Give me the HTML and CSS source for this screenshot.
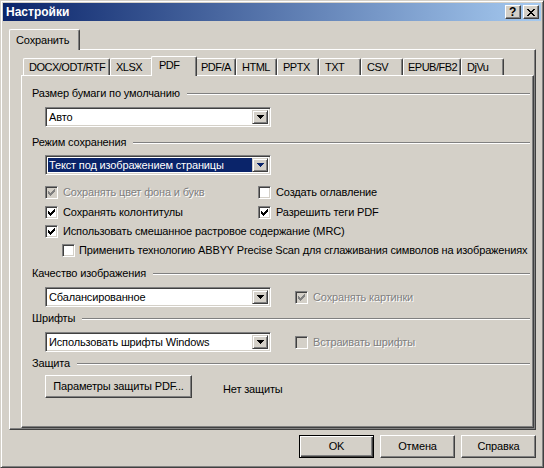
FILE: index.html
```html
<!DOCTYPE html>
<html lang="ru">
  <head>
    <meta charset="UTF-8" />
    <meta name="viewport" content="width=device-width, initial-scale=1.0" />
    <title>Настройки</title>
    <link rel="stylesheet" href="styles.css">
  </head>
  <body>
    <div class="window">
      <div class="titlebar">
        <span class="title">Настройки</span>
        <span class="cap-btn help">?</span>
        <span class="cap-btn close">
          <svg width="8" height="7" viewBox="0 0 8 7"><path d="M0 0h2v1H0zM6 0h2v1H6zM1 1h2v1H1zM5 1h2v1H5zM2 2h4v1H2zM3 3h2v1H3zM2 4h4v1H2zM1 5h2v1H1zM5 5h2v1H5zM0 6h2v1H0zM6 6h2v1H6z"/></svg>
        </span>
      </div>

      <div class="client">
        <div class="tabs outer-tabs">
          <div class="tab selected">Сохранить</div>
        </div>

        <div class="panel outer-panel">
          <div class="tabs inner-tabs">
            <div class="tab tab-docx">DOCX/ODT/RTF</div>
            <div class="tab tab-xlsx">XLSX</div>
            <div class="tab selected">PDF</div>
            <div class="tab tab-narrow">PDF/A</div>
            <div class="tab tab-narrow">HTML</div>
            <div class="tab">PPTX</div>
            <div class="tab">TXT</div>
            <div class="tab">CSV</div>
            <div class="tab tab-epub">EPUB/FB2</div>
            <div class="tab tab-xlsx">DjVu</div>
          </div>

          <div class="panel inner-panel">
            <div class="group-head head-paper"><span>Размер бумаги по умолчанию</span><i class="line"></i></div>
            <div class="combo">
              <span class="combo-text">Авто</span>
              <span class="combo-arrow"><svg width="7" height="4" viewBox="0 0 7 4"><path d="M0 0h7v1H0zM1 1h5v1H1zM2 2h3v1H2zM3 3h1v1H3z"/></svg></span>
            </div>

            <div class="group-head head-mode"><span>Режим сохранения</span><i class="line"></i></div>
            <div class="combo focused">
              <span class="combo-text">Текст под изображением страницы</span>
              <span class="combo-arrow"><svg width="7" height="4" viewBox="0 0 7 4"><path d="M0 0h7v1H0zM1 1h5v1H1zM2 2h3v1H2zM3 3h1v1H3z"/></svg></span>
            </div>

            <div class="options">
              <label class="option disabled">
                <span class="check"><svg width="7" height="7" viewBox="0 0 7 7"><path d="M6 0h1v1H6zM5 1h2v1H5zM0 2h1v1H0zM4 2h3v1H4zM0 3h2v1H0zM3 3h3v1H3zM0 4h5v1H0zM1 5h3v1H1zM2 6h1v1H2z"/></svg></span>
                Сохранять цвет фона и букв
              </label>
              <label class="option">
                <span class="check"></span>
                Создать оглавление
              </label>
              <label class="option">
                <span class="check"><svg width="7" height="7" viewBox="0 0 7 7"><path d="M6 0h1v1H6zM5 1h2v1H5zM0 2h1v1H0zM4 2h3v1H4zM0 3h2v1H0zM3 3h3v1H3zM0 4h5v1H0zM1 5h3v1H1zM2 6h1v1H2z"/></svg></span>
                Сохранять колонтитулы
              </label>
              <label class="option">
                <span class="check"><svg width="7" height="7" viewBox="0 0 7 7"><path d="M6 0h1v1H6zM5 1h2v1H5zM0 2h1v1H0zM4 2h3v1H4zM0 3h2v1H0zM3 3h3v1H3zM0 4h5v1H0zM1 5h3v1H1zM2 6h1v1H2z"/></svg></span>
                Разрешить теги PDF
              </label>
              <label class="option wide">
                <span class="check"><svg width="7" height="7" viewBox="0 0 7 7"><path d="M6 0h1v1H6zM5 1h2v1H5zM0 2h1v1H0zM4 2h3v1H4zM0 3h2v1H0zM3 3h3v1H3zM0 4h5v1H0zM1 5h3v1H1zM2 6h1v1H2z"/></svg></span>
                Использовать смешанное растровое содержание (MRC)
              </label>
              <label class="option wide sub">
                <span class="check"></span>
                Применить технологию ABBYY Precise Scan для сглаживания символов на изображениях
              </label>
            </div>

            <div class="group-head head-quality"><span>Качество изображения</span><i class="line"></i></div>
            <div class="combo-row">
              <div class="combo">
                <span class="combo-text">Сбалансированное</span>
                <span class="combo-arrow"><svg width="7" height="4" viewBox="0 0 7 4"><path d="M0 0h7v1H0zM1 1h5v1H1zM2 2h3v1H2zM3 3h1v1H3z"/></svg></span>
              </div>
              <label class="option disabled">
                <span class="check"><svg width="7" height="7" viewBox="0 0 7 7"><path d="M6 0h1v1H6zM5 1h2v1H5zM0 2h1v1H0zM4 2h3v1H4zM0 3h2v1H0zM3 3h3v1H3zM0 4h5v1H0zM1 5h3v1H1zM2 6h1v1H2z"/></svg></span>
                Сохранять картинки
              </label>
            </div>

            <div class="group-head head-fonts"><span>Шрифты</span><i class="line"></i></div>
            <div class="combo-row">
              <div class="combo">
                <span class="combo-text">Использовать шрифты Windows</span>
                <span class="combo-arrow"><svg width="7" height="4" viewBox="0 0 7 4"><path d="M0 0h7v1H0zM1 1h5v1H1zM2 2h3v1H2zM3 3h1v1H3z"/></svg></span>
              </div>
              <label class="option disabled">
                <span class="check"></span>
                Встраивать шрифты
              </label>
            </div>

            <div class="group-head head-protect"><span>Защита</span><i class="line"></i></div>
            <div class="protect-row">
              <button class="btn wide-btn">Параметры защиты PDF...</button>
              <span class="protect-state">Нет защиты</span>
            </div>
          </div>
        </div>

        <div class="dialog-buttons">
          <button class="btn default">OK</button>
          <button class="btn">Отмена</button>
          <button class="btn">Справка</button>
        </div>
      </div>
    </div>
  </body>
</html>
```

FILE: styles.css
```css
* {
  box-sizing: border-box;
}
body {
  margin: 0;
  background-color: #d4d0c8;
  font-family: "Liberation Sans", Arial, sans-serif;
  font-size: 11px;
  line-height: 13px;
  letter-spacing: -0.15px;
  color: #000;
  overflow: hidden;
}
.window {
  width: 544px;
  height: 468px;
  display: flex;
  flex-direction: column;
  padding: 2px;
  background-color: #d4d0c8;
  border: 1px solid;
  border-color: #d4d0c8 #404040 #404040 #d4d0c8;
  box-shadow: inset 1px 1px #fff, inset -1px -1px #808080;
}

/* title bar */
.titlebar {
  height: 18px;
  display: flex;
  align-items: center;
  padding: 0 2px 0 3px;
  background: linear-gradient(to right, #0a246a, #a6caf0);
}
.title {
  flex: 1;
  color: #fff;
  font-weight: bold;
  font-size: 12px;
  letter-spacing: 0;
}
.cap-btn {
  width: 16px;
  height: 14px;
  display: flex;
  align-items: center;
  justify-content: center;
  background-color: #d4d0c8;
  border: 1px solid;
  border-color: #fff #404040 #404040 #fff;
  box-shadow: inset -1px -1px #808080;
  font-weight: bold;
  font-size: 12px;
}
.cap-btn.help {
  margin-right: 2px;
  padding-right: 1px;
}
.cap-btn svg {
  fill: #000;
  shape-rendering: crispEdges;
}

/* client area */
.client {
  flex: 1;
  display: flex;
  flex-direction: column;
  padding: 8px 5px 0 6px;
}

/* tabs */
.tabs {
  display: flex;
  align-items: flex-end;
  position: relative;
  z-index: 1;
}
.tab {
  width: 42px;
  height: 17px;
  padding: 2px 0 0 5px;
  background-color: #d4d0c8;
  border: 1px solid #fff;
  border-right-color: #404040;
  border-bottom: none;
  border-radius: 2px 2px 0 0;
  box-shadow: inset -1px 0 #808080;
  white-space: nowrap;
}
.inner-tabs .tab {
  letter-spacing: -0.5px;
}
.tab-docx {
  width: 87px;
}
.tab-xlsx {
  width: 43px;
}
.tab-narrow {
  width: 41px;
}
.tab-epub {
  width: 58px;
  padding-left: 4px;
}
.tab.selected {
  width: 46px;
  height: 20px;
  margin: 0 -2px -1px -2px;
  padding: 2px 0 0 7px;
  position: relative;
  z-index: 2;
}
.outer-tabs {
  height: 20px;
}
.outer-tabs .tab.selected {
  width: 71px;
  height: 21px;
  margin: 0 0 -1px 0;
  padding: 4px 0 0 6px;
}

/* tab panels */
.panel {
  background-color: #d4d0c8;
  border: 1px solid;
  border-color: #fff #404040 #404040 #fff;
  box-shadow: inset -1px -1px #808080;
}
.outer-panel {
  height: 381px;
  display: flex;
  flex-direction: column;
  padding: 6px 1px 1px 11px;
}
.inner-tabs {
  height: 19px;
  padding-left: 2px;
}
.inner-panel {
  flex: 1;
  padding: 0 3px 0 10px;
}

/* group headings */
.group-head {
  display: flex;
  align-items: center;
  gap: 7px;
  height: 13px;
}
.group-head .line {
  flex: 1;
  height: 2px;
  border-top: 1px solid #808080;
  border-bottom: 1px solid #fff;
}
.head-paper {
  margin-top: 11px;
}
.head-mode {
  margin-top: 9px;
}
.head-quality {
  margin-top: 7px;
}
.head-fonts,
.head-protect {
  margin-top: 5px;
}

/* combo boxes */
.combo {
  width: 226px;
  height: 20px;
  display: flex;
  margin: 7px 0 0 13px;
  padding: 2px;
  background-color: #fff;
  border: 1px solid;
  border-color: #808080 #fff #fff #808080;
  box-shadow: inset 1px 1px #404040, inset -1px -1px #d4d0c8;
}
.combo.focused {
  margin-top: 6px;
}
.combo-text {
  flex: 1;
  padding: 1px 0 0 1px;
  white-space: nowrap;
  overflow: hidden;
}
.combo.focused .combo-text {
  background-color: #0a246a;
  color: #fff;
}
.combo-arrow {
  width: 16px;
  display: flex;
  align-items: center;
  justify-content: center;
  background-color: #d4d0c8;
  border: 1px solid;
  border-color: #d4d0c8 #404040 #404040 #d4d0c8;
  box-shadow: inset 1px 1px #fff, inset -1px -1px #808080;
}
.combo-arrow svg {
  fill: #000;
  shape-rendering: crispEdges;
}
.combo.focused .combo-arrow svg {
  fill: #0a246a;
}
.combo-row {
  display: flex;
  align-items: center;
  margin-top: 7px;
}
.combo-row .combo {
  margin-top: 0;
}
.combo-row .option {
  margin-left: 24px;
}

/* check boxes */
.options {
  display: grid;
  grid-template-columns: 213px 1fr;
  margin: 7px 0 0 13px;
}
.option {
  height: 20px;
  display: flex;
  align-items: center;
  gap: 5px;
  white-space: nowrap;
}
.option.wide {
  grid-column: 1 / 3;
  height: 19px;
}
.option.sub {
  padding-left: 17px;
  gap: 4px;
}
.check {
  width: 13px;
  height: 13px;
  flex: none;
  display: flex;
  align-items: center;
  justify-content: center;
  background-color: #fff;
  border: 1px solid;
  border-color: #808080 #fff #fff #808080;
  box-shadow: inset 1px 1px #404040, inset -1px -1px #d4d0c8;
}
.check svg {
  fill: #000;
  shape-rendering: crispEdges;
}
.option.disabled {
  color: #808080;
  text-shadow: 1px 1px 0 #fff;
}
.option.disabled .check {
  background-color: #d4d0c8;
}
.option.disabled .check svg {
  fill: #808080;
}

/* buttons */
.btn {
  width: 75px;
  height: 23px;
  padding: 0;
  font: inherit;
  font-weight: normal;
  letter-spacing: inherit;
  color: #000;
  background-color: #d4d0c8;
  border: 1px solid;
  border-color: #fff #404040 #404040 #fff;
  box-shadow: inset -1px -1px #808080;
}
.btn.default {
  border-color: #000;
  box-shadow: inset 1px 1px #fff, inset -1px -1px #404040, inset -2px -2px #808080;
}
.protect-row {
  display: flex;
  align-items: center;
  margin: 5px 0 0 13px;
}
.wide-btn {
  width: 147px;
}
.protect-state {
  margin: 6px 0 0 31px;
}
.dialog-buttons {
  display: flex;
  justify-content: flex-end;
  gap: 6px;
  margin-top: 5px;
}
```
